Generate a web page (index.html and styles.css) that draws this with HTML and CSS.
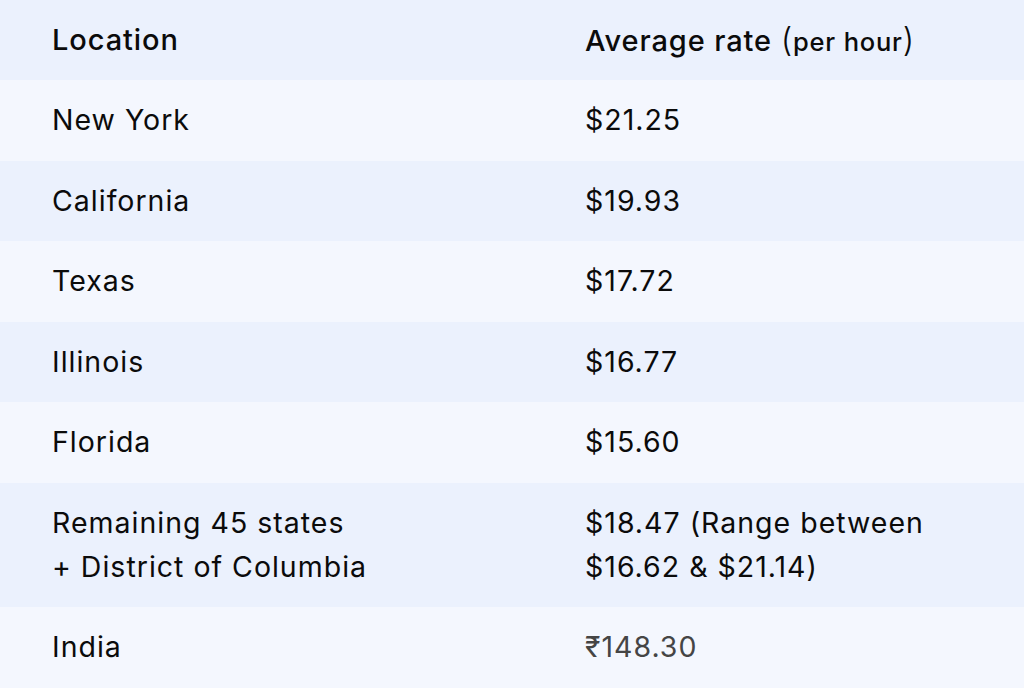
FILE: index.html
```html
<!DOCTYPE html>
<html>
<head>
<meta charset="utf-8">
<link rel="stylesheet" href="styles.css">
</head>
<body>
<div class="rates">
  <div class="row head">
    <div class="cell loc">Location</div>
    <div class="cell val">Average rate <span class="paren">(</span><span class="small">per hour</span><span class="paren">)</span></div>
  </div>
  <div class="row light">
    <div class="cell loc">New York</div>
    <div class="cell val">$21.25</div>
  </div>
  <div class="row dark">
    <div class="cell loc">California</div>
    <div class="cell val">$19.93</div>
  </div>
  <div class="row light">
    <div class="cell loc">Texas</div>
    <div class="cell val">$17.72</div>
  </div>
  <div class="row dark">
    <div class="cell loc">Illinois</div>
    <div class="cell val">$16.77</div>
  </div>
  <div class="row light">
    <div class="cell loc">Florida</div>
    <div class="cell val">$15.60</div>
  </div>
  <div class="row dark tall">
    <div class="cell loc">Remaining 45 states<br>+ District of Columbia</div>
    <div class="cell val">$18.47 (Range between<br>$16.62 &amp; $21.14)</div>
  </div>
  <div class="row light last">
    <div class="cell loc">India</div>
    <div class="cell val muted">₹148.30</div>
  </div>
</div>
</body>
</html>
```

FILE: styles.css
```css
html, body {
  margin: 0;
  padding: 0;
  background: #f4f7fe;
}
body {
  font-family: Inter, "Noto Sans", sans-serif;
  color: #0b0b0b;
}
.rates {
  display: flex;
  flex-direction: column;
  width: 1024px;
}
.row {
  display: grid;
  grid-template-columns: 585px 1fr;
  align-items: center;
  height: 80.5px;
  font-size: 28.5px;
  letter-spacing: 1px;
  line-height: 44px;
}
.row.head {
  height: 80px;
  background: #ebf1fd;
  font-size: 29px;
  font-weight: 500;
  letter-spacing: 0.9px;
}
.row.light { background: #f4f7fe; }
.row.dark { background: #ebf1fd; }
.row.tall { height: 124px; }
.cell.loc { padding-left: 52px; }
.paren { font-weight: 300; font-size: 33px; }
.small { font-size: 25.5px; letter-spacing: 0.8px; }
.muted { color: #454545; }
```
